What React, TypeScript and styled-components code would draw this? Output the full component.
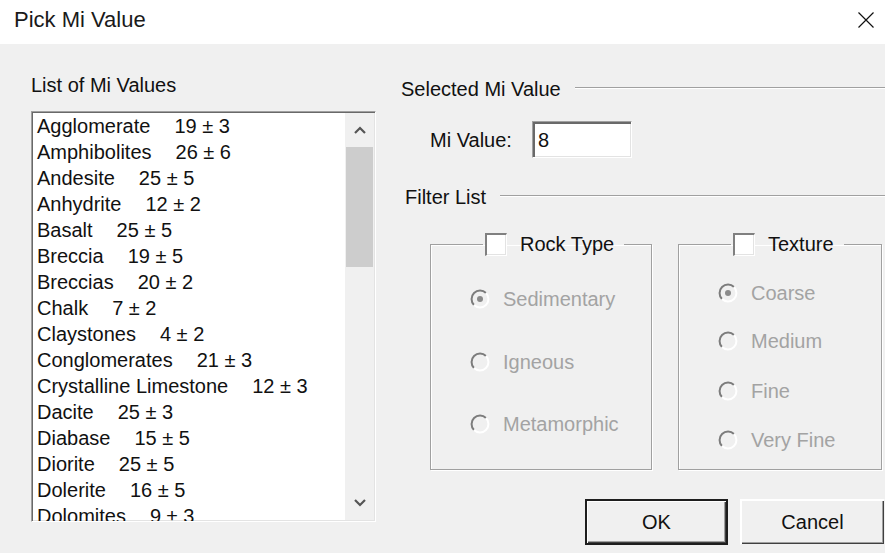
import React from "react";
import styled, { createGlobalStyle } from "styled-components";

const GlobalStyle = createGlobalStyle`
	html, body {
		margin: 0;
		padding: 0;
		background: #f0f0f0;
	}
	body {
		font-family: "Liberation Sans", Arial, sans-serif;
		color: #111;
	}
`;

const MI_VALUES: [string, string][] = [
	["Agglomerate", "19 ± 3"],
	["Amphibolites", "26 ± 6"],
	["Andesite", "25 ± 5"],
	["Anhydrite", "12 ± 2"],
	["Basalt", "25 ± 5"],
	["Breccia", "19 ± 5"],
	["Breccias", "20 ± 2"],
	["Chalk", "7 ± 2"],
	["Claystones", "4 ± 2"],
	["Conglomerates", "21 ± 3"],
	["Crystalline Limestone", "12 ± 3"],
	["Dacite", "25 ± 3"],
	["Diabase", "15 ± 5"],
	["Diorite", "25 ± 5"],
	["Dolerite", "16 ± 5"],
	["Dolomites", "9 ± 3"],
];

const Window = styled.div`
	width: 885px;
	height: 553px;
	overflow: hidden;
	display: flex;
	flex-direction: column;
`;

const TitleBar = styled.div`
	height: 44px;
	background: #fff;
	display: flex;
	align-items: center;
	justify-content: space-between;
	padding: 0 6px 4px 14px;
	box-sizing: border-box;
`;

const Title = styled.div`
	font-size: 22px;
	color: #1a1a1a;
`;

const CloseBtn = styled.div`
	width: 20px;
	height: 20px;
	margin-right: 3px;
	display: flex;
	align-items: center;
	justify-content: center;
`;

const Body = styled.div`
	flex: 1;
	display: flex;
	background: #f0f0f0;
	font-size: 20px;
`;

const LeftCol = styled.div`
	width: 376px;
	box-sizing: border-box;
	padding: 28px 0 0 31px;
	display: flex;
	flex-direction: column;
`;

const Label = styled.div`
	line-height: 26px;
	height: 26px;
	white-space: nowrap;
`;

const ListBox = styled.div`
	margin-top: 13px;
	height: 411px;
	box-sizing: border-box;
	border-top: 1px solid #a0a0a0;
	border-left: 1px solid #a0a0a0;
	border-right: 1px solid #fff;
	border-bottom: 1px solid #fff;
	box-shadow: inset 1px 1px 0 #696969, inset -1px -1px 0 #e3e3e3;
	background: #fff;
	display: flex;
	overflow: hidden;
`;

const Items = styled.div`
	flex: 1;
	padding: 1px 0 0 5px;
	overflow: hidden;
`;

const Item = styled.div`
	height: 26px;
	line-height: 26px;
	white-space: nowrap;
`;

const ItemValue = styled.span`
	margin-left: 24px;
`;

const ScrollBar = styled.div`
	width: 29px;
	margin: 1px 1px 1px 0;
	background: #f0f0f0;
	display: flex;
	flex-direction: column;
	align-items: center;
`;

const ScrollArrow = styled.div`
	height: 34px;
	width: 100%;
	display: flex;
	align-items: center;
	justify-content: center;
`;

const Thumb = styled.div`
	width: 27px;
	height: 120px;
	background: #cdcdcd;
`;

const Track = styled.div`
	flex: 1;
`;

const RightCol = styled.div`
	flex: 1;
	padding: 32px 0 0 25px;
	display: flex;
	flex-direction: column;
`;

const SectionHead = styled.div<{ $indent?: number; $gap: number }>`
	display: flex;
	align-items: center;
	padding-left: ${(p) => p.$indent ?? 0}px;
	gap: ${(p) => p.$gap}px;
	line-height: 26px;
	height: 26px;
	white-space: nowrap;
`;

const Etched = styled.div`
	flex: 1;
	height: 1px;
	margin-top: -2px;
	background: #a0a0a0;
	border-bottom: 1px solid #fff;
`;

const ValueRow = styled.div`
	margin-top: 19px;
	display: flex;
	align-items: center;
	padding-left: 29px;
	gap: 20px;
`;

const TextInput = styled.div`
	width: 100px;
	height: 37px;
	box-sizing: border-box;
	background: #fff;
	border-top: 1px solid #a0a0a0;
	border-left: 1px solid #a0a0a0;
	border-right: 1px solid #fff;
	border-bottom: 1px solid #fff;
	box-shadow: inset 2px 2px 0 #696969, inset -1px -1px 0 #e3e3e3;
	padding: 4px 0 0 5px;
	line-height: 28px;
`;

const FilterHead = styled(SectionHead)`
	margin-top: 26px;
`;

const Groups = styled.div`
	margin-top: 22px;
	display: flex;
	gap: 26px;
	padding-left: 29px;
`;

const Group = styled.fieldset<{ $w: number }>`
	margin: 0;
	width: ${(p) => p.$w}px;
	height: 238px;
	box-sizing: border-box;
	padding: 0 0 0 39px;
	border: 1px solid #a0a0a0;
	box-shadow: inset 1px 1px 0 #fff, 1px 1px 0 #fff;
	display: flex;
	flex-direction: column;
`;

const Legend = styled.legend`
	margin-left: 13px;
	padding: 0 10px 0 2px;
	height: 24px;
	display: flex;
	align-items: center;
	gap: 13px;
	line-height: 24px;
`;

const Check = styled.span`
	width: 22px;
	height: 23px;
	box-sizing: border-box;
	background: #fff;
	border-top: 2px solid #808080;
	border-left: 2px solid #808080;
	border-right: 1px solid #fff;
	border-bottom: 1px solid #fff;
	box-shadow: inset -1px -1px 0 #e3e3e3;
`;

const RadioRow = styled.div<{ $top: number }>`
	margin-top: ${(p) => p.$top}px;
	height: 26px;
	display: flex;
	align-items: center;
	gap: 13px;
	color: #a3a3a3;
	white-space: nowrap;
`;

const Buttons = styled.div`
	margin-top: 29px;
	display: flex;
	justify-content: flex-end;
	gap: 12px;
`;

const Button = styled.div<{ $default?: boolean; $w: number }>`
	width: ${(p) => p.$w}px;
	height: 46px;
	box-sizing: border-box;
	display: flex;
	align-items: center;
	justify-content: center;
	background: #f0f0f0;
	border: 1px solid ${(p) => (p.$default ? "#1e1e1e" : "#f0f0f0")};
	box-shadow: inset 1px 1px 0 #fff, inset -1px -1px 0 #404040,
		inset -2px -2px 0 #a0a0a0;
	${(p) => (p.$default ? "border-width: 2px;" : "border-top-color: #fff; border-left-color: #fff;")}
`;

const Chevron = ({ up }: { up?: boolean }) => (
	<svg width="12" height="8" viewBox="0 0 12 8">
		<polyline
			points={up ? "1,7 6,2 11,7" : "1,1 6,6 11,1"}
			fill="none"
			stroke="#555"
			strokeWidth="2.2"
		/>
	</svg>
);

const Radio = ({ checked }: { checked?: boolean }) => (
	<svg width="20" height="20" viewBox="0 0 20 20">
		<circle cx="10" cy="10" r="8.5" fill="#f0f0f0" />
		<path d="M3.99 16.01 A8.5 8.5 0 0 1 16.01 3.99" fill="none" stroke="#7c7c7c" strokeWidth="2" />
		<path d="M16.01 3.99 A8.5 8.5 0 0 1 3.99 16.01" fill="none" stroke="#ffffff" strokeWidth="2" />
		{checked && <circle cx="10" cy="10" r="3" fill="#8a8a8a" />}
	</svg>
);

const RadioOption = ({ label, top, checked }: { label: string; top: number; checked?: boolean }) => (
	<RadioRow $top={top}>
		<Radio checked={checked} />
		{label}
	</RadioRow>
);

export default function App() {
	return (
		<Window>
			<GlobalStyle />
			<TitleBar>
				<Title>Pick Mi Value</Title>
				<CloseBtn>
					<svg width="16" height="16" viewBox="0 0 16 16">
						<path d="M0.5 0.5 L15.5 15.5 M15.5 0.5 L0.5 15.5" stroke="#111" strokeWidth="1.2" />
					</svg>
				</CloseBtn>
			</TitleBar>
			<Body>
				<LeftCol>
					<Label>List of Mi Values</Label>
					<ListBox>
						<Items>
							{MI_VALUES.map(([name, value]) => (
								<Item key={name}>
									{name}
									<ItemValue>{value}</ItemValue>
								</Item>
							))}
						</Items>
						<ScrollBar>
							<ScrollArrow>
								<Chevron up />
							</ScrollArrow>
							<Thumb />
							<Track />
							<ScrollArrow>
								<Chevron />
							</ScrollArrow>
						</ScrollBar>
					</ListBox>
				</LeftCol>
				<RightCol>
					<SectionHead $gap={14}>
						Selected Mi Value
						<Etched />
					</SectionHead>
					<ValueRow>
						<Label>Mi Value:</Label>
						<TextInput>8</TextInput>
					</ValueRow>
					<FilterHead $indent={4} $gap={14}>
						Filter List
						<Etched />
					</FilterHead>
					<Groups>
						<Group $w={222}>
							<Legend>
								<Check />
								Rock Type
							</Legend>
							<RadioOption label="Sedimentary" top={30} checked />
							<RadioOption label="Igneous" top={37} />
							<RadioOption label="Metamorphic" top={36} />
						</Group>
						<Group $w={204}>
							<Legend>
								<Check />
								Texture
							</Legend>
							<RadioOption label="Coarse" top={24} checked />
							<RadioOption label="Medium" top={22} />
							<RadioOption label="Fine" top={24} />
							<RadioOption label="Very Fine" top={23} />
						</Group>
					</Groups>
					<Buttons>
						<Button $default $w={143}>OK</Button>
						<Button $w={145}>Cancel</Button>
					</Buttons>
				</RightCol>
			</Body>
		</Window>
	);
}
